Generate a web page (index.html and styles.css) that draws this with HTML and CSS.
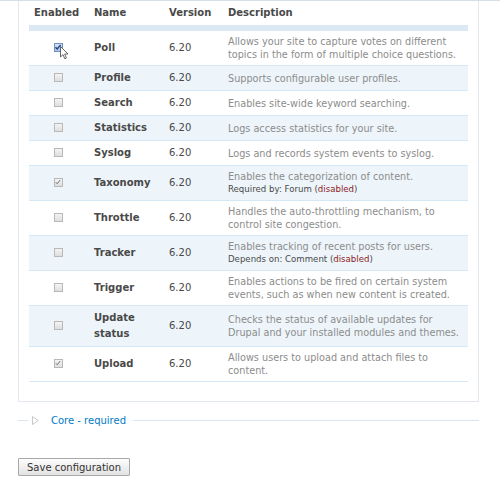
FILE: index.html
```html
<!DOCTYPE html>
<html>
<head>
<meta charset="utf-8">
<link rel="stylesheet" href="styles.css">
</head>
<body>
<div class="topline"></div>
<div class="page">
  <div class="fieldset">
    <table class="modules">
      <thead>
        <tr><th class="c-en">Enabled</th><th class="c-name">Name</th><th class="c-ver">Version</th><th>Description</th></tr>
      </thead>
      <tbody>
        <tr class="odd first">
          <td class="c-en"><span class="cb checked hover"><svg viewBox="0 0 8 8" width="8" height="8"><path d="M1.5 4.2 L3.2 6 L6.6 1.8" fill="none" stroke="#1f3f7a" stroke-width="1.3"/></svg></span>
            <svg class="cursor" viewBox="0 0 9 14" width="9" height="14"><path d="M0.5 0.5 L0.5 11 L3 8.6 L4.8 12.8 L6.4 12.1 L4.7 8 L8 8 Z" fill="#fff" stroke="#555" stroke-width="0.9" stroke-linejoin="round"/></svg>
          </td>
          <td class="c-name">Poll</td><td class="c-ver">6.20</td>
          <td class="desc">Allows your site to capture votes on different topics in the form of multiple choice questions.</td>
        </tr>
        <tr class="even">
          <td class="c-en"><span class="cb"></span></td>
          <td class="c-name">Profile</td><td class="c-ver">6.20</td>
          <td class="desc">Supports configurable user profiles.</td>
        </tr>
        <tr class="odd">
          <td class="c-en"><span class="cb"></span></td>
          <td class="c-name">Search</td><td class="c-ver">6.20</td>
          <td class="desc">Enables site-wide keyword searching.</td>
        </tr>
        <tr class="even">
          <td class="c-en"><span class="cb"></span></td>
          <td class="c-name">Statistics</td><td class="c-ver">6.20</td>
          <td class="desc">Logs access statistics for your site.</td>
        </tr>
        <tr class="odd">
          <td class="c-en"><span class="cb"></span></td>
          <td class="c-name">Syslog</td><td class="c-ver">6.20</td>
          <td class="desc">Logs and records system events to syslog.</td>
        </tr>
        <tr class="even">
          <td class="c-en"><span class="cb checked"><svg viewBox="0 0 8 8" width="8" height="8"><path d="M1.8 4.2 L3.2 5.8 L6.2 2" fill="none" stroke="#777" stroke-width="1"/></svg></span></td>
          <td class="c-name">Taxonomy</td><td class="c-ver">6.20</td>
          <td class="desc">Enables the categorization of content.<div class="req">Required by: Forum (<span class="dis">disabled</span>)</div></td>
        </tr>
        <tr class="odd">
          <td class="c-en"><span class="cb"></span></td>
          <td class="c-name">Throttle</td><td class="c-ver">6.20</td>
          <td class="desc">Handles the auto-throttling mechanism, to control site congestion.</td>
        </tr>
        <tr class="even">
          <td class="c-en"><span class="cb"></span></td>
          <td class="c-name">Tracker</td><td class="c-ver">6.20</td>
          <td class="desc">Enables tracking of recent posts for users.<div class="req">Depends on: Comment (<span class="dis">disabled</span>)</div></td>
        </tr>
        <tr class="odd">
          <td class="c-en"><span class="cb"></span></td>
          <td class="c-name">Trigger</td><td class="c-ver">6.20</td>
          <td class="desc">Enables actions to be fired on certain system events, such as when new content is created.</td>
        </tr>
        <tr class="even">
          <td class="c-en"><span class="cb"></span></td>
          <td class="c-name">Update status</td><td class="c-ver">6.20</td>
          <td class="desc">Checks the status of available updates for Drupal and your installed modules and themes.</td>
        </tr>
        <tr class="odd">
          <td class="c-en"><span class="cb checked"><svg viewBox="0 0 8 8" width="8" height="8"><path d="M1.8 4.2 L3.2 5.8 L6.2 2" fill="none" stroke="#777" stroke-width="1"/></svg></span></td>
          <td class="c-name">Upload</td><td class="c-ver">6.20</td>
          <td class="desc">Allows users to upload and attach files to content.</td>
        </tr>
      </tbody>
    </table>
  </div>

  <div class="collapsed">
    <span class="seg-left"></span>
    <span class="legend"><svg class="tri" viewBox="0 0 7 9" width="7" height="9"><path d="M0.5 0.5 L6.3 4.5 L0.5 8.5 Z" fill="#fff" stroke="#c8c8c8" stroke-width="1"/></svg><a class="link">Core - required</a></span>
    <span class="seg-right"></span>
  </div>

  <div class="actions">
    <button class="btn">Save configuration</button>
  </div>
</div>
</body>
</html>
```

FILE: styles.css
```css
html, body {
  margin: 0;
  padding: 0;
  background: #fff;
  font-family: "DejaVu Sans", Verdana, sans-serif;
  color: #494949;
}
.topline {
  height: 1px;
  background: #d6dfe7;
}
.page {
  padding-left: 18px;
  width: 461px;
}
.fieldset {
  border: 1px solid #e2e8ee;
  border-top: none;
  padding: 0 10px 19px 10px;
  background: #fff;
}
.modules {
  width: 100%;
  border-collapse: collapse;
  table-layout: fixed;
}
.modules th {
  font-size: 10px;
  font-weight: bold;
  text-align: left;
  line-height: 16px;
  padding: 4px 6px 4px 6px;
  color: #494949;
  border-bottom: 6px solid #dce9f4;
}
.modules th.c-en { padding-left: 5px; }
.modules td {
  padding: 4px 6px;
  vertical-align: middle;
  font-size: 10px;
  line-height: 16px;
}
.modules tr.even { background: #edf5fa; }
.modules tr.odd { background: #fff; }
.modules tbody tr { border-bottom: 1px solid #d3e7f4; }
.c-en { width: 48px; text-align: center; position: relative; }
.modules th.c-en { text-align: left; }
.c-name { width: 63px; }
.c-ver { width: 47px; }
td.c-name { font-weight: bold; }
td.desc {
  font-size: 9.7px;
  line-height: 13px;
  color: #8c8c8c;
}
.req {
  font-size: 8.6px;
  line-height: 13px;
  color: #494949;
}
.dis { color: #8b1a1a; }
.cb {
  display: inline-block;
  width: 7px;
  height: 7px;
  border: 1px solid #b8b8b8;
  background: linear-gradient(#f4f4f4, #dedede);
  vertical-align: middle;
  position: relative;
  top: -1px;
  margin-left: -1px;
}
.cb svg { display: block; margin: -1px 0 0 -1px; }
.cb.hover {
  border-color: #6f90c0;
  background: linear-gradient(#d6e4f7, #a9c3e8);
}
.cursor {
  position: absolute;
  left: 31px;
  top: 15px;
}
.collapsed {
  display: flex;
  align-items: center;
  margin-top: 11px;
  height: 14px;
}
.seg-left {
  width: 10px;
  height: 1px;
  background: #d9e4ec;
}
.seg-right {
  flex: 1;
  height: 1px;
  background: #d9e4ec;
}
.legend {
  display: flex;
  align-items: center;
  padding: 0 7px 0 4px;
  font-size: 10px;
}
.tri { margin-right: 12px; }
.link { color: #027ac6; }
.actions {
  margin-top: 31px;
  line-height: 0;
}
.btn {
  font-family: "DejaVu Sans", Verdana, sans-serif;
  font-size: 10px;
  color: #333;
  height: 18px;
  padding: 0 8px;
  border: 1px solid #a8a8a8;
  border-radius: 1px;
  background: linear-gradient(#fdfdfd, #e2e2e2);
  line-height: 15px;
  margin: 0;
}
```
